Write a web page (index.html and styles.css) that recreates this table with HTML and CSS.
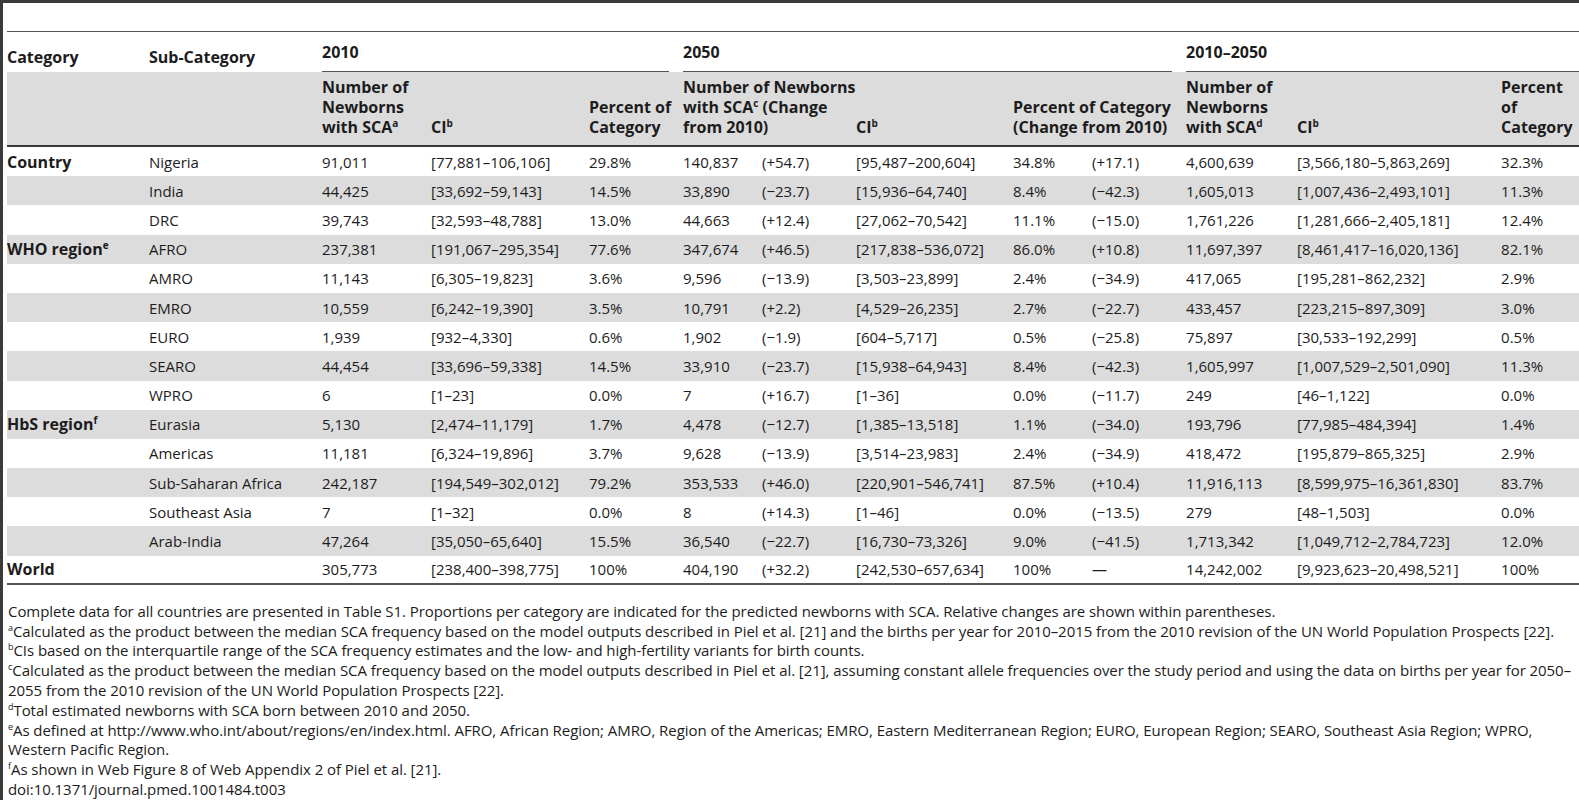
FILE: index.html
```html
<!DOCTYPE html>
<html lang="en">
<head>
    <meta charset="UTF-8">
    <title>Table 3. Predicted newborns with SCA</title>
    <link rel="stylesheet" href="styles.css">
</head>
<body>
    <div class="page">
        <table class="sca-table">
            <colgroup>
                <col style="width:142px">
                <col style="width:173px">
                <col style="width:109px">
                <col style="width:158px">
                <col style="width:94px">
                <col style="width:79px">
                <col style="width:94px">
                <col style="width:157px">
                <col style="width:79px">
                <col style="width:94px">
                <col style="width:111px">
                <col style="width:204px">
                <col style="width:78px">
            </colgroup>
            <thead>
                <tr class="group-row">
                    <th class="cat">Category</th>
                    <th class="cat">Sub-Category</th>
                    <th colspan="3" class="year"><div class="year-label">2010</div></th>
                    <th colspan="5" class="year"><div class="year-label">2050</div></th>
                    <th colspan="3" class="year last"><div class="year-label">2010–2050</div></th>
                </tr>
                <tr class="sub-row">
                    <th></th>
                    <th></th>
                    <th>Number of<br>Newborns<br>with SCA<sup>a</sup></th>
                    <th>CI<sup>b</sup></th>
                    <th>Percent of<br>Category</th>
                    <th colspan="2">Number of Newborns<br>with SCA<sup>c</sup> (Change<br>from 2010)</th>
                    <th>CI<sup>b</sup></th>
                    <th colspan="2">Percent of Category<br>(Change from 2010)</th>
                    <th>Number of<br>Newborns<br>with SCA<sup>d</sup></th>
                    <th>CI<sup>b</sup></th>
                    <th>Percent<br>of<br>Category</th>
                </tr>
            </thead>
            <tbody>
                <tr>
                    <td class="group">Country</td><td>Nigeria</td>
                    <td>91,011</td><td>[77,881–106,106]</td><td>29.8%</td>
                    <td>140,837</td><td>(+54.7)</td><td>[95,487–200,604]</td><td>34.8%</td><td>(+17.1)</td>
                    <td>4,600,639</td><td>[3,566,180–5,863,269]</td><td>32.3%</td>
                </tr>
                <tr>
                    <td></td><td>India</td>
                    <td>44,425</td><td>[33,692–59,143]</td><td>14.5%</td>
                    <td>33,890</td><td>(−23.7)</td><td>[15,936–64,740]</td><td>8.4%</td><td>(−42.3)</td>
                    <td>1,605,013</td><td>[1,007,436–2,493,101]</td><td>11.3%</td>
                </tr>
                <tr>
                    <td></td><td>DRC</td>
                    <td>39,743</td><td>[32,593–48,788]</td><td>13.0%</td>
                    <td>44,663</td><td>(+12.4)</td><td>[27,062–70,542]</td><td>11.1%</td><td>(−15.0)</td>
                    <td>1,761,226</td><td>[1,281,666–2,405,181]</td><td>12.4%</td>
                </tr>
                <tr>
                    <td class="group">WHO region<sup>e</sup></td><td>AFRO</td>
                    <td>237,381</td><td>[191,067–295,354]</td><td>77.6%</td>
                    <td>347,674</td><td>(+46.5)</td><td>[217,838–536,072]</td><td>86.0%</td><td>(+10.8)</td>
                    <td>11,697,397</td><td>[8,461,417–16,020,136]</td><td>82.1%</td>
                </tr>
                <tr>
                    <td></td><td>AMRO</td>
                    <td>11,143</td><td>[6,305–19,823]</td><td>3.6%</td>
                    <td>9,596</td><td>(−13.9)</td><td>[3,503–23,899]</td><td>2.4%</td><td>(−34.9)</td>
                    <td>417,065</td><td>[195,281–862,232]</td><td>2.9%</td>
                </tr>
                <tr>
                    <td></td><td>EMRO</td>
                    <td>10,559</td><td>[6,242–19,390]</td><td>3.5%</td>
                    <td>10,791</td><td>(+2.2)</td><td>[4,529–26,235]</td><td>2.7%</td><td>(−22.7)</td>
                    <td>433,457</td><td>[223,215–897,309]</td><td>3.0%</td>
                </tr>
                <tr>
                    <td></td><td>EURO</td>
                    <td>1,939</td><td>[932–4,330]</td><td>0.6%</td>
                    <td>1,902</td><td>(−1.9)</td><td>[604–5,717]</td><td>0.5%</td><td>(−25.8)</td>
                    <td>75,897</td><td>[30,533–192,299]</td><td>0.5%</td>
                </tr>
                <tr>
                    <td></td><td>SEARO</td>
                    <td>44,454</td><td>[33,696–59,338]</td><td>14.5%</td>
                    <td>33,910</td><td>(−23.7)</td><td>[15,938–64,943]</td><td>8.4%</td><td>(−42.3)</td>
                    <td>1,605,997</td><td>[1,007,529–2,501,090]</td><td>11.3%</td>
                </tr>
                <tr>
                    <td></td><td>WPRO</td>
                    <td>6</td><td>[1–23]</td><td>0.0%</td>
                    <td>7</td><td>(+16.7)</td><td>[1–36]</td><td>0.0%</td><td>(−11.7)</td>
                    <td>249</td><td>[46–1,122]</td><td>0.0%</td>
                </tr>
                <tr>
                    <td class="group">HbS region<sup>f</sup></td><td>Eurasia</td>
                    <td>5,130</td><td>[2,474–11,179]</td><td>1.7%</td>
                    <td>4,478</td><td>(−12.7)</td><td>[1,385–13,518]</td><td>1.1%</td><td>(−34.0)</td>
                    <td>193,796</td><td>[77,985–484,394]</td><td>1.4%</td>
                </tr>
                <tr>
                    <td></td><td>Americas</td>
                    <td>11,181</td><td>[6,324–19,896]</td><td>3.7%</td>
                    <td>9,628</td><td>(−13.9)</td><td>[3,514–23,983]</td><td>2.4%</td><td>(−34.9)</td>
                    <td>418,472</td><td>[195,879–865,325]</td><td>2.9%</td>
                </tr>
                <tr>
                    <td></td><td>Sub-Saharan Africa</td>
                    <td>242,187</td><td>[194,549–302,012]</td><td>79.2%</td>
                    <td>353,533</td><td>(+46.0)</td><td>[220,901–546,741]</td><td>87.5%</td><td>(+10.4)</td>
                    <td>11,916,113</td><td>[8,599,975–16,361,830]</td><td>83.7%</td>
                </tr>
                <tr>
                    <td></td><td>Southeast Asia</td>
                    <td>7</td><td>[1–32]</td><td>0.0%</td>
                    <td>8</td><td>(+14.3)</td><td>[1–46]</td><td>0.0%</td><td>(−13.5)</td>
                    <td>279</td><td>[48–1,503]</td><td>0.0%</td>
                </tr>
                <tr>
                    <td></td><td>Arab-India</td>
                    <td>47,264</td><td>[35,050–65,640]</td><td>15.5%</td>
                    <td>36,540</td><td>(−22.7)</td><td>[16,730–73,326]</td><td>9.0%</td><td>(−41.5)</td>
                    <td>1,713,342</td><td>[1,049,712–2,784,723]</td><td>12.0%</td>
                </tr>
                <tr>
                    <td class="group">World</td><td></td>
                    <td>305,773</td><td>[238,400–398,775]</td><td>100%</td>
                    <td>404,190</td><td>(+32.2)</td><td>[242,530–657,634]</td><td>100%</td><td>—</td>
                    <td>14,242,002</td><td>[9,923,623–20,498,521]</td><td>100%</td>
                </tr>
            </tbody>
        </table>

        <div class="notes">
            <p>Complete data for all countries are presented in Table S1. Proportions per category are indicated for the predicted newborns with SCA. Relative changes are shown within parentheses.</p>
            <p><sup>a</sup>Calculated as the product between the median SCA frequency based on the model outputs described in Piel et al. [21] and the births per year for 2010–2015 from the 2010 revision of the UN World Population Prospects [22].</p>
            <p><sup>b</sup>CIs based on the interquartile range of the SCA frequency estimates and the low- and high-fertility variants for birth counts.</p>
            <p><sup>c</sup>Calculated as the product between the median SCA frequency based on the model outputs described in Piel et al. [21], assuming constant allele frequencies over the study period and using the data on births per year for 2050–<br>2055 from the 2010 revision of the UN World Population Prospects [22].</p>
            <p><sup>d</sup>Total estimated newborns with SCA born between 2010 and 2050.</p>
            <p><sup>e</sup>As defined at http://www.who.int/about/regions/en/index.html. AFRO, African Region; AMRO, Region of the Americas; EMRO, Eastern Mediterranean Region; EURO, European Region; SEARO, Southeast Asia Region; WPRO,<br>Western Pacific Region.</p>
            <p><sup>f</sup>As shown in Web Figure 8 of Web Appendix 2 of Piel et al. [21].</p>
            <p>doi:10.1371/journal.pmed.1001484.t003</p>
        </div>
    </div>
</body>
</html>
```

FILE: styles.css
```css
:root {
    --rule-dark: #3a3a3a;
    --rule: #555555;
    --band: #dcdcdc;
    --text: #1c1c1c;
}

* {
    margin: 0;
    padding: 0;
    box-sizing: border-box;
}

html,
body {
    overflow: hidden;
}

body {
    font-family: "Open Sans", "Liberation Sans", sans-serif;
    color: var(--text);
    background: #ffffff;
}

.page {
    height: 800px;
    overflow: hidden;
    border-left: 3px solid var(--rule-dark);
    border-top: 3px solid var(--rule-dark);
    padding: 28px 0 0 4px;
}

/* table */

.sca-table {
    width: 1572px;
    table-layout: fixed;
    border-collapse: separate;
    border-spacing: 0;
    border-top: 1px solid var(--rule);
}

.sca-table th,
.sca-table td {
    padding: 0;
    text-align: left;
    white-space: nowrap;
}

.sca-table th {
    font-size: 16px;
    font-weight: 700;
    line-height: 20px;
}

.sca-table sup {
    font-size: 10px;
    line-height: 0;
    vertical-align: 6px;
}

.group-row th {
    height: 40px;
    vertical-align: bottom;
}

.group-row .cat {
    padding-bottom: 5px;
}

.year-label {
    margin-right: 14px;
    padding-bottom: 9px;
    border-bottom: 1px solid var(--rule);
}

.year.last .year-label {
    margin-right: 0;
}

.sub-row th {
    height: 75px;
    vertical-align: bottom;
    padding-bottom: 8px;
    background: var(--band);
    border-bottom: 2px solid var(--rule-dark);
}

.sca-table td {
    height: 29.2px;
    font-size: 15px;
    line-height: 20px;
    vertical-align: middle;
}

.sca-table tbody tr:nth-child(even) td {
    background: var(--band);
}

.sca-table tbody tr:last-child td {
    border-bottom: 2px solid var(--rule);
}

.sca-table td.group {
    font-size: 16px;
    font-weight: 700;
}

/* footnotes */

.notes {
    padding: 17px 0 0 1px;
    font-size: 15px;
    letter-spacing: -0.06px;
    line-height: 19.8px;
}

.notes p {
    white-space: nowrap;
}

.notes sup {
    font-size: 9px;
    line-height: 0;
    vertical-align: 6px;
}
```
